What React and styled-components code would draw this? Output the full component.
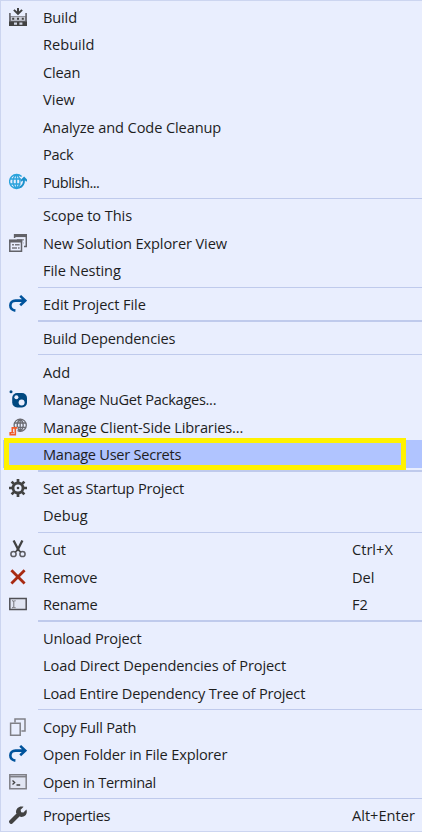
import React from "react"
import styled, { createGlobalStyle } from "styled-components"

const GlobalStyle = createGlobalStyle`
  body {
    margin: 0;
    background: #e9eefe;
  }
`;

const dark = "#424242";
const blue = "#00539c";

const BuildIcon = () => <Icon viewBox="0 0 18 18">
  <path d="M9 0v5M4.9 1.9L9 5.8l4.1-3.9" fill="none" stroke={dark} strokeWidth="2" />
  <path d="M0 5h1.8v3h14.4V5H18v13H0z" fill="#707078" />
  <path d="M2 8.6h14v4.2H2z" fill="#c8cbd6" />
  <path d="M3.2 9.8h2v2h-2zM8 9.8h2v2H8zM12.8 9.8h2v2h-2zM0 13.4h18V18H0z" fill={dark} />
  <path d="M5 14.6h3v2.2H5zM10.4 14.6h3v2.2h-3z" fill="#d4d8e6" />
</Icon>

const PublishIcon = () => <Icon viewBox="0 0 18 18">
  <g fill="none" stroke="#2ba3dc" strokeWidth="1.4">
    <path d="M12.6 3.6A7 7 0 1 0 12.4 13.6M1 6h11M1 11h10.5M7.5 1.5v14M7.5 1.5C2.8 5 2.8 12 7.5 15.5M7.5 1.5C10 3.5 11 6 11 8.5s-1 5-3.5 7" />
    <path d="M10.5 14.2c3-.6 4.6-3 4.6-8M12 8l3.1-3.2L18 8" stroke="#1b91cc" strokeWidth="1.9" />
  </g>
</Icon>

const ViewIcon = () => <Icon viewBox="0 0 18 18">
  <g fill="none" stroke="#626268" strokeWidth="1.5">
    <path d="M5.6 4V.8h11.7v11.7H15" />
    <path d="M5 1.8h13" strokeWidth="2.6" />
    <path d="M8 5.8h7M14.5 9H15" stroke="#96969f" />
    <path d="M.8 6.2h11.7v11H.8z" />
    <path d="M0 7.2h13.2" strokeWidth="2.6" />
    <path d="M3 10.8h2M6 10.8h4.6M3 14h5M9 14h1.6" stroke="#77777f" />
  </g>
</Icon>

const ArrowIcon = () => <Icon viewBox="0 0 18 18">
  <path d="M6.4 15.6C-.6 14.6-.1 5.6 6.6 5.6h9M11.2.9l5 4.7-5 4.7" fill="none" stroke={blue} strokeWidth="2.6" />
</Icon>

const NuGetIcon = () => <Icon viewBox="0 0 18 18">
  <circle cx="2" cy="1.7" r="1.5" fill="#004880" />
  <rect x="3.2" y="3" width="14.8" height="14.5" rx="5" fill="#004880" />
  <circle cx="7.4" cy="7.3" r="2" fill="#e9eefe" />
  <circle cx="12.6" cy="12.5" r="3" fill="#e9eefe" />
</Icon>

const LibraryIcon = () => <Icon viewBox="0 0 18 18">
  <g fill="none" stroke="#6b6b72" strokeWidth="1.3">
    <circle cx="11.2" cy="7.2" r="6.1" />
    <path d="M5.4 5h11.6M5.4 9.4h11.6M11.2 1v12.4M11.2 1.2c-4 3-4 9 0 12M11.2 1.2c4 3 4 9 0 12" />
  </g>
  <path d="M2 9h6.5v9H0v-4z" fill="#e9eefe" />
  <path d="M3.3 15V9.9h5M6.3 10.2v6.6H1.2v-2.1h3.6" fill="none" stroke="#f05a28" strokeWidth="1.6" />
</Icon>

const GearIcon = () => <Icon viewBox="0 0 18 18">
  <circle cx="9" cy="9" r="5" fill="none" stroke={dark} strokeWidth="2.8" />
  <path d="M9 0v4M9 14v4M0 9h4M14 9h4M2.6 2.6l2.9 2.9M12.5 12.5l2.9 2.9M2.6 15.4l2.9-2.9M12.5 5.5l2.9-2.9" stroke={dark} strokeWidth="2.7" />
  <circle cx="9" cy="9" r="1.3" fill={dark} />
</Icon>

const CutIcon = () => <Icon viewBox="0 0 18 18">
  <g fill="none" stroke={dark}>
    <path d="M4.6.5l5.2 10.2M13.4.5L8.2 10.7" strokeWidth="2.3" />
    <circle cx="4.5" cy="14" r="2.6" strokeWidth="1.5" stroke="#5c5c62" />
    <circle cx="13.5" cy="14" r="2.6" strokeWidth="1.5" stroke="#5c5c62" />
    <path d="M6.3 12L9 9.6l2.7 2.4" strokeWidth="1.5" />
  </g>
</Icon>

const RemoveIcon = () => <Icon viewBox="0 0 18 18">
  <path d="M2.4 2.2l13.2 13.3M15.6 2.2L2.4 15.5" stroke="#a82a12" strokeWidth="2.8" />
</Icon>

const RenameIcon = () => <Icon viewBox="0 0 18 18">
  <path d="M.8 3.4h16.4v11.2H.8z" fill="#e1e5f3" stroke="#505056" strokeWidth="1.5" />
  <path d="M3 5.8h1.2l.6.6.6-.6h1.2M4.8 6v6.5M3 12.7h1.2l.6-.6.6.6h1.2" fill="none" stroke="#73737a" />
</Icon>

const CopyIcon = () => <Icon viewBox="0 0 18 18">
  <g fill="none" stroke="#808087" strokeWidth="1.5">
    <path d="M6 4.5V1h10v12h-3.6" />
    <path d="M1.6 5.2h9.6v12H1.6z" />
  </g>
</Icon>

const TerminalIcon = () => <Icon viewBox="0 0 18 18">
  <path d="M.8 1.7h16.4v14.1H.8z" fill="#e1e5f3" stroke="#808087" strokeWidth="1.5" />
  <path d="M.8 3.7h16.4" fill="none" stroke="#808087" strokeWidth="1.5" />
  <path d="M3.5 7.4l2.2 2-2.2 2M7.5 12h3.7" fill="none" stroke={dark} strokeWidth="1.3" />
</Icon>

const WrenchIcon = () => <Icon viewBox="0 0 18 18">
  <path d="M2.2 15.8l7.3-7.3" stroke={dark} strokeWidth="4.2" strokeLinecap="round" />
  <path d="M14.6.8l-3 3 .5 2.4 2.3.4 3-3c1.6 4-1.6 8-6.2 7.2L7.1 6.9C6.4 2.6 10.4-.8 14.6.8z" fill={dark} />
</Icon>

const groups = [
  [
    { label: "Build", icon: BuildIcon, tracking: -0.15 },
    { label: "Rebuild" },
    { label: "Clean", tracking: -0.2 },
    { label: "View" },
    { label: "Analyze and Code Cleanup", tracking: -0.11 },
    { label: "Pack", tracking: -0.3 },
    { label: "Publish...", icon: PublishIcon, tracking: -0.5 },
  ],
  [
    { label: "Scope to This", tracking: -0.08 },
    { label: "New Solution Explorer View", icon: ViewIcon, tracking: -0.12 },
    { label: "File Nesting", tracking: -0.08 },
  ],
  [{ label: "Edit Project File", icon: ArrowIcon, tracking: -0.08 }],
  [{ label: "Build Dependencies", tracking: -0.16 }],
  [
    { label: "Add" },
    { label: "Manage NuGet Packages...", icon: NuGetIcon, tracking: -0.29 },
    { label: "Manage Client-Side Libraries...", icon: LibraryIcon, tracking: -0.16 },
    { label: "Manage User Secrets", selected: true, tracking: -0.27 },
  ],
  [
    { label: "Set as Startup Project", icon: GearIcon, tracking: -0.22 },
    { label: "Debug" },
  ],
  [
    { label: "Cut", icon: CutIcon, tracking: -0.2, keys: "Ctrl+X" },
    { label: "Remove", icon: RemoveIcon, tracking: -0.1, keys: "Del" },
    { label: "Rename", icon: RenameIcon, tracking: -0.25, keys: "F2" },
  ],
  [
    { label: "Unload Project", tracking: -0.14 },
    { label: "Load Direct Dependencies of Project", tracking: -0.12 },
    { label: "Load Entire Dependency Tree of Project", tracking: -0.19 },
  ],
  [
    { label: "Copy Full Path", icon: CopyIcon, tracking: -0.25 },
    { label: "Open Folder in File Explorer", icon: ArrowIcon, tracking: -0.16 },
    { label: "Open in Terminal", icon: TerminalIcon, tracking: -0.3 },
  ],
  [{ label: "Properties", icon: WrenchIcon, tracking: -0.35, keys: "Alt+Enter" }],
];

// these groups start with the heavier divider
const thickBefore = [3, 5, 7];

const App = () => {
  return <Menu>
    <GlobalStyle />
    {groups.map((items, i) => <React.Fragment key={i}>
      {i > 0 && <Divider $thick={thickBefore.includes(i)}><Line $thick={thickBefore.includes(i)} /></Divider>}
      {items.map(({ label, icon: ItemIcon, keys, selected, tracking }) => (
        <Item key={label} $selected={selected}>
          <IconCell>{ItemIcon && <ItemIcon />}</IconCell>
          <Label $tracking={tracking}>{label}</Label>
          {keys && <Label>{keys}</Label>}
          {selected && <Marker />}
        </Item>
      ))}
    </React.Fragment>)}
  </Menu>
}

const Menu = styled.div`
  box-sizing: border-box;
  width: 422px;
  height: 832px;
  overflow: hidden;
  padding: 2px 0 0 2px;
  background: #e9eefe;
  border-top: 1px solid #ccd5f0;
  border-left: 1px solid #ccd5f0;
  border-bottom: 1px solid #ccd5f0;
  color: #1e1e1e;
  font-family: "Open Sans", "Noto Sans", sans-serif;
  font-size: 14.6px;
  font-stretch: 93%;
`;

const Item = styled.div`
  position: relative;
  display: grid;
  grid-template-columns: 40px 309px 1fr;
  align-items: center;
  height: 27.5px;
  white-space: nowrap;
  background: ${props => props.$selected ? "#b0c4ff" : "transparent"};
`;

const IconCell = styled.div`
  display: flex;
  padding-left: 5.6px;
`;

const Icon = styled.svg`
  width: 18px;
  height: 18px;
`;

const Label = styled.span`
  line-height: 20px;
  letter-spacing: ${props => props.$tracking || 0}px;
`;

const Divider = styled.div`
  height: 6.24px;
  padding: ${props => props.$thick ? 2 : 2.6}px 0 0 35px;
  box-sizing: border-box;
`;

const Line = styled.div`
  height: ${props => props.$thick ? 2 : 1}px;
  background: #bfcaec;
`;

// highlighter frame drawn over the chosen command
const Marker = styled.div`
  position: absolute;
  top: -2px;
  left: 1px;
  box-sizing: border-box;
  width: 402px;
  height: 32px;
  border: 5px solid #fff200;
`;

export default App
